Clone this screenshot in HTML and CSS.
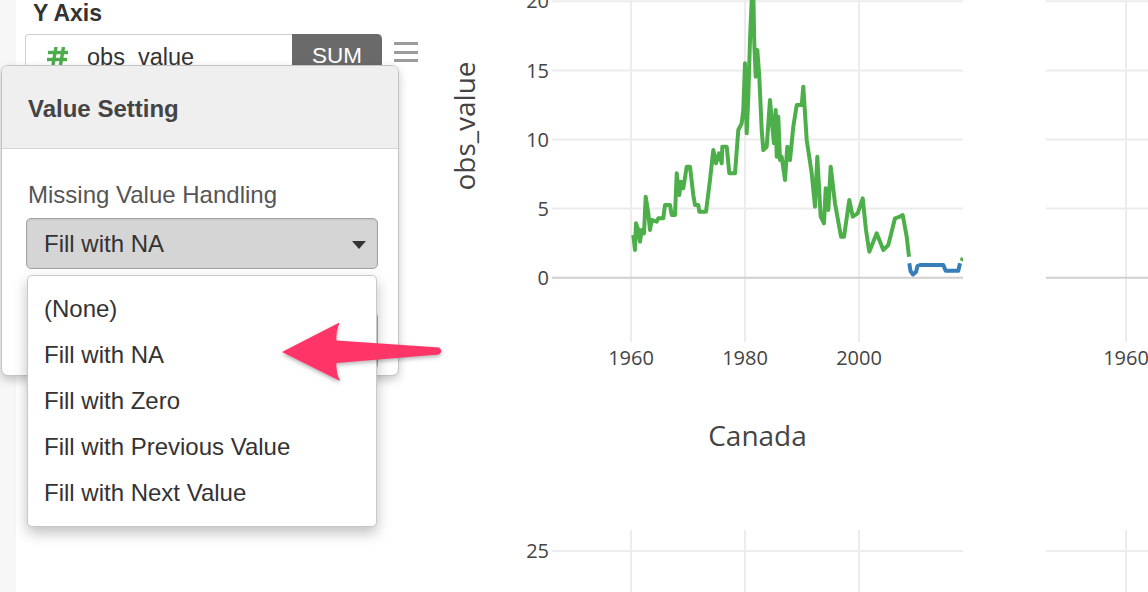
FILE: index.html
```html
<!DOCTYPE html>
<html>
<head>
<meta charset="utf-8">
<link rel="stylesheet" href="styles.css">
</head>
<body>
<div class="app">
  <div class="strip"></div>
  <div class="side">
    <h3 class="side-title">Y Axis</h3>
    <div class="field-row">
      <div class="field">
        <svg class="hash" width="22" height="18" viewBox="0 0 22 18"><g stroke="#4daa4d" stroke-width="3.4" stroke-linecap="butt"><line x1="1" y1="5.5" x2="21" y2="5.5"/><line x1="0" y1="12.5" x2="20" y2="12.5"/><line x1="9" y1="0" x2="6" y2="18"/><line x1="16.5" y1="0" x2="13.5" y2="18"/></g></svg>
        <span class="field-name">obs_value</span>
        <span class="agg">SUM</span>
      </div>
      <div class="menu-icon"><span></span><span></span><span></span></div>
    </div>

    <div class="popover">
      <div class="pop-head">Value Setting</div>
      <div class="pop-body">
        <div class="pop-label">Missing Value Handling</div>
        <div class="select"><span>Fill with NA</span><i class="caret"></i></div>
      </div>
      <div class="hidden-btn"></div>
      <ul class="options">
        <li>(None)</li>
        <li>Fill with NA</li>
        <li>Fill with Zero</li>
        <li>Fill with Previous Value</li>
        <li>Fill with Next Value</li>
      </ul>
    </div>
  </div>

  <svg class="chart" width="708" height="592" viewBox="440 0 708 592">
    <g class="grid">
      <line x1="552" y1="1.3" x2="963" y2="1.3"/>
      <line x1="552" y1="70.4" x2="963" y2="70.4"/>
      <line x1="552" y1="139.5" x2="963" y2="139.5"/>
      <line x1="552" y1="208.6" x2="963" y2="208.6"/>
      <line x1="631" y1="0" x2="631" y2="342"/>
      <line x1="745" y1="0" x2="745" y2="342"/>
      <line x1="859" y1="0" x2="859" y2="342"/>
      <line x1="1046" y1="1.3" x2="1148" y2="1.3"/>
      <line x1="1046" y1="70.4" x2="1148" y2="70.4"/>
      <line x1="1046" y1="139.5" x2="1148" y2="139.5"/>
      <line x1="1046" y1="208.6" x2="1148" y2="208.6"/>
      <line x1="1126" y1="0" x2="1126" y2="342"/>
      <line x1="552" y1="551" x2="963" y2="551"/>
      <line x1="1046" y1="551" x2="1148" y2="551"/>
      <line x1="631" y1="530" x2="631" y2="592"/>
      <line x1="745" y1="530" x2="745" y2="592"/>
      <line x1="859" y1="530" x2="859" y2="592"/>
      <line x1="1126" y1="530" x2="1126" y2="592"/>
    </g>
    <g class="zero">
      <line x1="552" y1="277.7" x2="963" y2="277.7"/>
      <line x1="1046" y1="277.7" x2="1148" y2="277.7"/>
    </g>
    <g class="ticks">
      <text x="549" y="8" text-anchor="end">20</text>
      <text x="549" y="77.6" text-anchor="end">15</text>
      <text x="549" y="146.7" text-anchor="end">10</text>
      <text x="549" y="215.8" text-anchor="end">5</text>
      <text x="549" y="284.9" text-anchor="end">0</text>
      <text x="631" y="365" text-anchor="middle">1960</text>
      <text x="745" y="365" text-anchor="middle">1980</text>
      <text x="859" y="365" text-anchor="middle">2000</text>
      <text x="1126" y="365" text-anchor="middle">1960</text>
      <text x="549" y="558.2" text-anchor="end">25</text>
    </g>
    <text class="axis-title" transform="translate(475 126) rotate(-90)" text-anchor="middle">obs_value</text>
    <text class="facet-title" x="757.5" y="445.5" text-anchor="middle">Canada</text>
    <clipPath id="plotclip"><rect x="552" y="-20" width="411" height="362"/></clipPath>
    <g clip-path="url(#plotclip)" fill="none" stroke-width="4" stroke-linejoin="round">
      <polyline stroke="#4daf4a" points="633.3,235 635,250 636,223.3 638.3,230 640,241.7 641.7,230 644,233.3 645.7,196.7 648.3,213.3 650,230 651.7,220 656.7,221.7 658.3,218.3 663.3,218.3 665,205 670,205 671.7,215 675,215 676.7,173.3 679.3,195 681,181.7 683.3,188.3 686.7,166.7 690,166.7 693.3,195 695,205 698.3,205 699.3,211.7 706,211.7 710,180 713.3,150 716,163.3 719,153.3 721.7,163.3 722.3,146.7 726.7,146.7 729.3,173.3 735,173.3 738.3,130 741.7,123.3 743.3,110 745,63.3 746.7,133.3 748.3,96.7 750,40 751.7,0 753.3,-8 754.3,43.3 755.7,76.7 757.3,50 759.3,76.7 761.7,130 763.3,150 766.7,146.7 770,100 772.3,126.7 774,143.3 775.7,110 776.7,156.7 778.3,116.7 780,160 781.7,156.7 785,180 787.3,146.7 790,160 793.3,126.7 796.7,105 801.7,105 803.3,86.7 806.7,140 811.7,173.3 815,206.7 817.3,156.7 820.7,216.7 824,223.3 825.7,188.3 828.3,210 830.7,166.7 835,203.3 841,236.7 844,236.7 849.3,200 852.7,216.7 857.7,213.3 862.7,198.3 866,230 869.3,251.7 876.7,233.3 883.3,250 888.3,245 895,218.3 900,216.7 902.7,215 906.7,236.7 909,256.7"/>
      <polyline stroke="#377eb8" points="909.3,263.3 910.5,271 913,274.5 916,272 917.5,266 920,265 943.3,265 945.7,270.7 958.3,270.7 960,263.3"/>
      <polyline stroke="#4daf4a" points="961.5,261 963,258"/>
    </g>
  </svg>

  <svg class="arrow" width="170" height="72" viewBox="0 0 170 72">
    <path d="M6,36 L63.5,6.5 Q59.5,16 60.5,24.5 L163,31.5 Q167.5,35 163,38.5 L60.5,47 Q59.5,56 64,65 Z" fill="#ff3568"/>
  </svg>
</div>
</body>
</html>
```

FILE: styles.css
```css
* { box-sizing: border-box; }

body {
  margin: 0;
  width: 1148px;
  height: 592px;
  overflow: hidden;
  background: #fff;
  color: #333;
  font-family: "Liberation Sans", Arial, sans-serif;
}

.app {
  position: relative;
  display: flex;
  height: 592px;
}

.strip {
  flex: none;
  width: 16px;
  background: #f7f7f7;
}

.side {
  position: relative;
  flex: none;
  width: 424px;
  padding-left: 9px;
}

.side-title {
  margin: 0 0 0 8px;
  height: 34px;
  font-size: 23px;
  line-height: 26px;
  font-weight: bold;
  color: #333;
}

.field-row {
  display: flex;
  align-items: flex-start;
  gap: 12px;
}

.field {
  display: flex;
  align-items: center;
  width: 357px;
  height: 42px;
  padding-top: 3px;
  border: 1px solid #cfcfcf;
  border-right: none;
  border-radius: 4px;
  font-size: 23.5px;
  line-height: 26px;
}

.hash {
  flex: none;
  margin-left: 21px;
  margin-top: -2px;
}

.field-name {
  margin-left: 18px;
  color: #333;
}

.agg {
  margin-left: auto;
  align-self: stretch;
  width: 90px;
  margin-top: -4px;
  margin-bottom: -1px;
  background: #6a6a6a;
  color: #fff;
  font-size: 22.5px;
  line-height: 44px;
  text-align: center;
  border-radius: 0 5px 5px 0;
}

.menu-icon {
  display: flex;
  flex-direction: column;
  gap: 5.5px;
  margin-top: 8px;
}

.menu-icon span {
  display: block;
  width: 24px;
  height: 3px;
  background: #9c9c9c;
}

.popover {
  position: absolute;
  left: -15px;
  top: 65px;
  width: 398px;
  height: 311px;
  background: #fff;
  border: 1px solid #c4c4c4;
  border-radius: 7px;
  box-shadow: 0 4px 10px rgba(0, 0, 0, 0.22);
  z-index: 5;
}

.pop-head {
  display: flex;
  align-items: center;
  height: 83px;
  padding: 3px 0 0 26px;
  background: #efefef;
  border-bottom: 1px solid #d6d6d6;
  border-radius: 6px 6px 0 0;
  font-size: 24px;
  line-height: 26px;
  font-weight: bold;
  color: #444;
}

.pop-body {
  padding-left: 24px;
}

.pop-label {
  margin: 33px 0 0 2px;
  font-size: 24px;
  line-height: 26px;
  color: #555;
}

.select {
  position: relative;
  display: flex;
  align-items: center;
  width: 352px;
  height: 51px;
  margin-top: 10px;
  padding-left: 17px;
  background: #d5d5d5;
  border: 1px solid #a2a2a2;
  border-radius: 5px;
  box-shadow: inset 0 1px 2px rgba(0, 0, 0, 0.08);
  font-size: 24px;
  line-height: 26px;
  color: #333;
}

.caret {
  position: absolute;
  right: 11px;
  top: 22px;
  width: 0;
  height: 0;
  border-left: 7.5px solid transparent;
  border-right: 7.5px solid transparent;
  border-top: 8px solid #333;
}

.hidden-btn {
  position: absolute;
  left: 40px;
  top: 246px;
  width: 336px;
  height: 58px;
  border: 1px solid #aaa;
  border-radius: 5px;
  background: #f4f4f4;
}

.options {
  position: absolute;
  left: 25px;
  top: 209px;
  width: 350px;
  margin: 0;
  padding: 10px 0;
  list-style: none;
  background: #fff;
  border: 1px solid #c8c8c8;
  border-radius: 5px;
  box-shadow: 0 6px 14px rgba(0, 0, 0, 0.25);
  z-index: 6;
}

.options li {
  height: 46px;
  padding-left: 16px;
  font-size: 24px;
  line-height: 46px;
  color: #333;
}

.chart {
  flex: none;
  display: block;
  font-family: "Open Sans", sans-serif;
}

.grid line {
  stroke: #ececec;
  stroke-width: 2;
}

.zero line {
  stroke: #cfcfcf;
  stroke-width: 2;
}

.ticks text {
  font-size: 20px;
  fill: #444;
}

.axis-title {
  font-size: 28px;
  fill: #444;
}

.facet-title {
  font-size: 28px;
  fill: #444;
}

.arrow {
  position: absolute;
  left: 276px;
  top: 316px;
  z-index: 10;
  filter: drop-shadow(0 2px 2px rgba(0, 0, 0, 0.3));
}
```
